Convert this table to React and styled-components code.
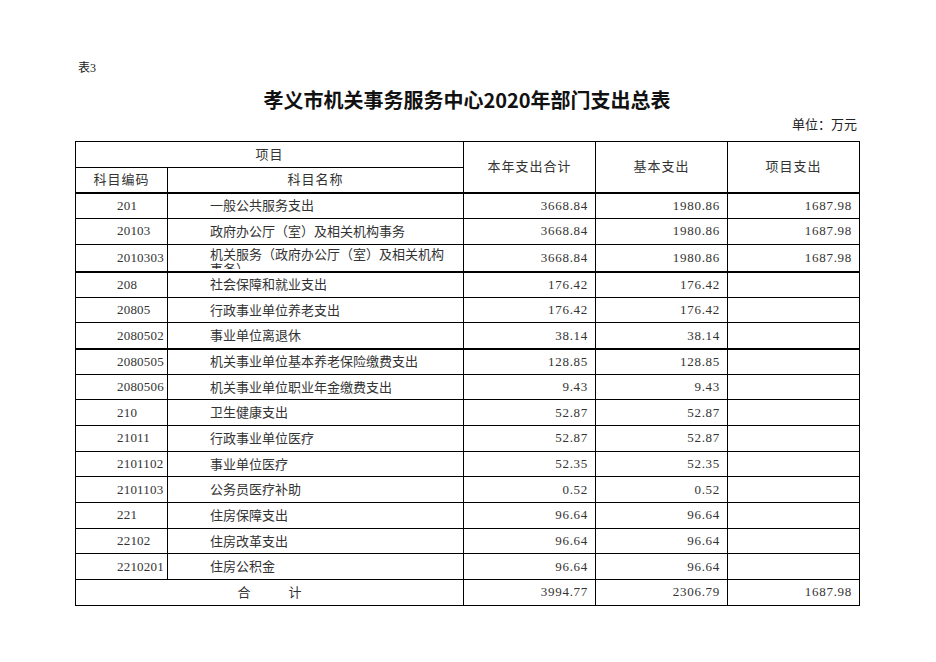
import React from 'react';
import styled, { createGlobalStyle } from 'styled-components';

const GlobalStyle = createGlobalStyle`
  html, body {
    margin: 0;
    padding: 0;
    background: #ffffff;
  }
  body {
    font-family: "Liberation Serif", "Noto Sans CJK SC", serif;
    color: #222;
  }
`;

const Page = styled.div`
  width: 784px;
  padding: 58px 0 0 75px;
`;

const TableNo = styled.div`
  font-size: 12px;
  line-height: 20px;
  padding-left: 3px;
`;

const Title = styled.h1`
  margin: 8px 0 0;
  text-align: center;
  font-family: "Noto Sans CJK SC", sans-serif;
  font-weight: 700;
  font-size: 20px;
  line-height: 28px;
  color: #111;
`;

const Unit = styled.div`
  text-align: right;
  padding-right: 2px;
  font-size: 13px;
  line-height: 18px;
  margin-top: 2px;
  margin-bottom: 7px;
`;

const Table = styled.table`
  width: 784px;
  border-collapse: collapse;
  table-layout: fixed;
  font-size: 13px;
  border: 1px solid #000;
`;

const Row = styled.tr`
  height: 25.67px;
  border-bottom: ${p => (p.$thick ? '2px' : '1px')} solid #000;
`;

const Th = styled.th`
  font-weight: 400;
  border: 1px solid #000;
  padding: 0 0 2px;
  text-align: center;
  color: #333;
  letter-spacing: 1px;
`;

const Code = styled.td`
  border-left: 1px solid #000;
  border-right: 1px solid #000;
  padding: 0 0 0 41px;
  text-align: left;
  letter-spacing: 0.2px;
  color: #333;
`;

const Name = styled.td`
  border-right: 1px solid #000;
  padding: 0 0 2px 42px;
  text-align: left;
  color: #333;
  overflow: hidden;
  white-space: nowrap;
`;

const WrapBox = styled.div`
  height: 24px;
  overflow: hidden;
  white-space: normal;
  line-height: 15px;
  padding-top: 2px;
  box-sizing: border-box;
  width: 242px;
`;

const Num = styled.td`
  border-right: 1px solid #000;
  padding: 0 7px 0 0;
  text-align: right;
  letter-spacing: 0.7px;
  color: #333;
`;

const Total = styled.td`
  border-right: 1px solid #000;
  padding: 0 0 2px;
  text-align: center;
  color: #333;
`;

const Gap = styled.span`
  display: inline-block;
  width: 38px;
`;

const rows = [
  ['201', '一般公共服务支出', '3668.84', '1980.86', '1687.98'],
  ['20103', '政府办公厅（室）及相关机构事务', '3668.84', '1980.86', '1687.98'],
  ['2010303', '机关服务（政府办公厅（室）及相关机构事务）', '3668.84', '1980.86', '1687.98', true, true],
  ['208', '社会保障和就业支出', '176.42', '176.42', ''],
  ['20805', '行政事业单位养老支出', '176.42', '176.42', ''],
  ['2080502', '事业单位离退休', '38.14', '38.14', '', true],
  ['2080505', '机关事业单位基本养老保险缴费支出', '128.85', '128.85', ''],
  ['2080506', '机关事业单位职业年金缴费支出', '9.43', '9.43', ''],
  ['210', '卫生健康支出', '52.87', '52.87', ''],
  ['21011', '行政事业单位医疗', '52.87', '52.87', ''],
  ['2101102', '事业单位医疗', '52.35', '52.35', ''],
  ['2101103', '公务员医疗补助', '0.52', '0.52', ''],
  ['221', '住房保障支出', '96.64', '96.64', ''],
  ['22102', '住房改革支出', '96.64', '96.64', ''],
  ['2210201', '住房公积金', '96.64', '96.64', ''],
];

export default function App() {
  return (
    <>
      <GlobalStyle />
      <Page>
        <TableNo>表3</TableNo>
        <Title>孝义市机关事务服务中心2020年部门支出总表</Title>
        <Unit>单位：万元</Unit>
        <Table>
          <colgroup>
            <col style={{ width: 92 }} />
            <col style={{ width: 296 }} />
            <col style={{ width: 132 }} />
            <col style={{ width: 132 }} />
            <col style={{ width: 132 }} />
          </colgroup>
          <thead>
            <Row>
              <Th colSpan={2}>项目</Th>
              <Th rowSpan={2}>本年支出合计</Th>
              <Th rowSpan={2}>基本支出</Th>
              <Th rowSpan={2}>项目支出</Th>
            </Row>
            <Row $thick>
              <Th>科目编码</Th>
              <Th>科目名称</Th>
            </Row>
          </thead>
          <tbody>
            {rows.map(([code, name, a, b, c, thick, wrap]) => (
              <Row key={code} $thick={thick}>
                <Code>{code}</Code>
                <Name>{wrap ? <WrapBox>{name}</WrapBox> : name}</Name>
                <Num>{a}</Num>
                <Num>{b}</Num>
                <Num>{c}</Num>
              </Row>
            ))}
            <Row>
              <Total colSpan={2}>
                合<Gap />计
              </Total>
              <Num>3994.77</Num>
              <Num>2306.79</Num>
              <Num>1687.98</Num>
            </Row>
          </tbody>
        </Table>
      </Page>
    </>
  );
}
